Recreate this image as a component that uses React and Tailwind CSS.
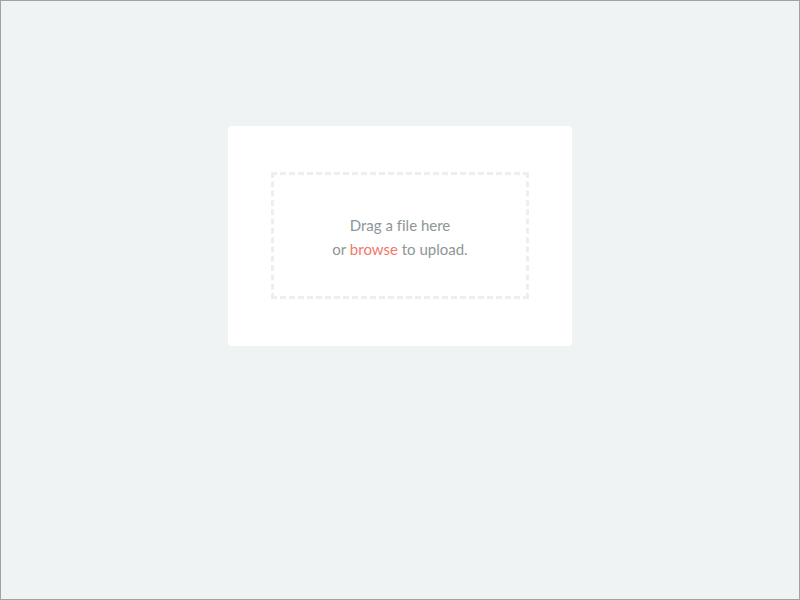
export default function App() {
  return (
    <div className="w-[800px] h-[600px] border border-[#9ea3a5] bg-[#eff3f4] flex justify-center items-start pt-[125px] font-['Lato','Open_Sans',sans-serif]">
      <div className="w-[344px] h-[220px] bg-white rounded-[3px] px-[43px] pt-[46px]">
        <div className="h-[127px] pt-[3px] border-[3px] border-dashed border-[#eceff0] flex flex-col items-center justify-center text-[15px] leading-[24px] text-[#8e9597] [font-variant-ligatures:none]">
          <p>Drag a file here</p>
          <p>
            or <a href="#" className="text-[#f2776b]">browse</a> to upload.
          </p>
        </div>
      </div>
    </div>
  );
}
